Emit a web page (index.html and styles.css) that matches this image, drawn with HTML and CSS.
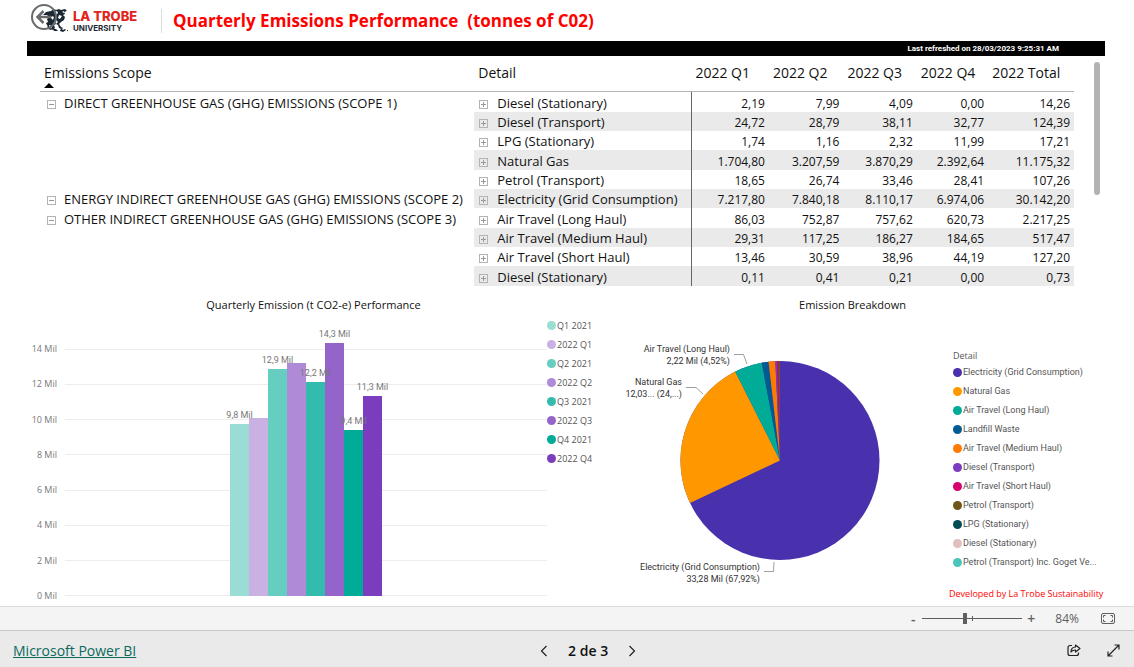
FILE: index.html
```html
<!DOCTYPE html>
<html lang="en">
<head>
<meta charset="utf-8">
<title>Quarterly Emissions Performance</title>
<link rel="stylesheet" href="styles.css">
</head>
<body>
<main class="report">
  <header class="head">
    <button class="back" aria-label="Back">
      <svg width="40" height="32" viewBox="30 1 40 32">
        <g fill="#1b2733">
          <path d="M46 12l5-1 3-2 2 1 3-1 2 1 4-1 2 2-3 1 1 2-2 1 2 2-1 3-3 2-2 2 2 3 2 1-1 1-3-1-1-3-2-1-2 1 1 3-2 2-2-1 1-2-2-2-3 0-1-2 2-1-1-3 2-2-2-2-4 0z"/>
          <path d="M47 24l2 1 1 3 2 1-1 1-3-1zM53 29l3 0 2 2-4 0zM61 28l2 2 2-1 1 1-3 2-3-1zM67 30h1v1h-1z"/>
        </g>
        <g fill="#fff"><path d="M54 12l3-1 1 2-2 2zM52 16l2 1-1 3-2-2zM59 15l3 1-2 3-2-1zM56 20l2 2-2 2-1-2zM62 12l2-1v2z"/></g>
        <circle cx="44" cy="17" r="12" fill="none" stroke="#6b6b6b" stroke-width="2"/>
        <path d="M51 17H38M43.500 11l-6 6 6 6" fill="none" stroke="#6b6b6b" stroke-width="2.500"/>
      </svg>
    </button>
    <div class="brand"><span class="brand-top">LA TROBE</span><span class="brand-sub">UNIVERSITY</span></div>
    <h1 class="title">Quarterly Emissions Performance&nbsp; (tonnes of C02)</h1>
  </header>
  <div class="stamp">Last refreshed on 28/03/2023 9:25:31 AM</div>

  <section class="matrix">
    <table class="grid">
      <colgroup><col class="c-scope"><col class="c-detail"><col class="c-q1"><col class="c-q2"><col class="c-q3"><col class="c-q4"><col class="c-total"></colgroup>
      <thead><tr><th>Emissions Scope<span class="sort"></span></th><th>Detail</th><th>2022 Q1</th><th>2022 Q2</th><th>2022 Q3</th><th>2022 Q4</th><th>2022 Total</th></tr></thead>
      <tbody>
        <tr><td><button class="box" aria-label="Collapse"></button>DIRECT GREENHOUSE GAS (GHG) EMISSIONS (SCOPE 1)</td><td><button class="box plus" aria-label="Expand"></button>Diesel (Stationary)</td><td>2,19</td><td>7,99</td><td>4,09</td><td>0,00</td><td>14,26</td></tr>
        <tr><td></td><td><button class="box plus" aria-label="Expand"></button>Diesel (Transport)</td><td>24,72</td><td>28,79</td><td>38,11</td><td>32,77</td><td>124,39</td></tr>
        <tr><td></td><td><button class="box plus" aria-label="Expand"></button>LPG (Stationary)</td><td>1,74</td><td>1,16</td><td>2,32</td><td>11,99</td><td>17,21</td></tr>
        <tr><td></td><td><button class="box plus" aria-label="Expand"></button>Natural Gas</td><td>1.704,80</td><td>3.207,59</td><td>3.870,29</td><td>2.392,64</td><td>11.175,32</td></tr>
        <tr><td></td><td><button class="box plus" aria-label="Expand"></button>Petrol (Transport)</td><td>18,65</td><td>26,74</td><td>33,46</td><td>28,41</td><td>107,26</td></tr>
        <tr><td><button class="box" aria-label="Collapse"></button>ENERGY INDIRECT GREENHOUSE GAS (GHG) EMISSIONS (SCOPE 2)</td><td><button class="box plus" aria-label="Expand"></button>Electricity (Grid Consumption)</td><td>7.217,80</td><td>7.840,18</td><td>8.110,17</td><td>6.974,06</td><td>30.142,20</td></tr>
        <tr><td><button class="box" aria-label="Collapse"></button>OTHER INDIRECT GREENHOUSE GAS (GHG) EMISSIONS (SCOPE 3)</td><td><button class="box plus" aria-label="Expand"></button>Air Travel (Long Haul)</td><td>86,03</td><td>752,87</td><td>757,62</td><td>620,73</td><td>2.217,25</td></tr>
        <tr><td></td><td><button class="box plus" aria-label="Expand"></button>Air Travel (Medium Haul)</td><td>29,31</td><td>117,25</td><td>186,27</td><td>184,65</td><td>517,47</td></tr>
        <tr><td></td><td><button class="box plus" aria-label="Expand"></button>Air Travel (Short Haul)</td><td>13,46</td><td>30,59</td><td>38,96</td><td>44,19</td><td>127,20</td></tr>
        <tr><td></td><td><button class="box plus" aria-label="Expand"></button>Diesel (Stationary)</td><td>0,11</td><td>0,41</td><td>0,21</td><td>0,00</td><td>0,73</td></tr>
      </tbody>
    </table>
    <div class="scroll"></div>
  </section>

  <div class="charts">
    <section class="bar-card">
      <h2 class="chart-title">Quarterly Emission (t CO2-e) Performance</h2>
      <div class="plot">
        <div class="ticks">
          <div class="tick"><span>14 Mil</span></div>
          <div class="tick"><span>12 Mil</span></div>
          <div class="tick"><span>10 Mil</span></div>
          <div class="tick"><span>8 Mil</span></div>
          <div class="tick"><span>6 Mil</span></div>
          <div class="tick"><span>4 Mil</span></div>
          <div class="tick"><span>2 Mil</span></div>
          <div class="tick"><span>0 Mil</span></div>
        </div>
        <div class="bars">
          <div class="bar q1-21" style="height:69.8%"><span>9,8 Mil</span></div>
          <div class="bar q1-22" style="height:72.2%"></div>
          <div class="bar q2-21" style="height:92.1%"><span>12,9 Mil</span></div>
          <div class="bar q2-22" style="height:94.5%"></div>
          <div class="bar q3-21" style="height:86.8%"><span>12,2 Mil</span></div>
          <div class="bar q3-22" style="height:102.6%"><span>14,3 Mil</span></div>
          <div class="bar q4-21" style="height:67.3%"><span>9,4 Mil</span></div>
          <div class="bar q4-22" style="height:81.1%"><span>11,3 Mil</span></div>
        </div>
      </div>
      <ul class="legend">
        <li><i class="dot q1-21"></i>Q1 2021</li>
        <li><i class="dot q1-22"></i>2022 Q1</li>
        <li><i class="dot q2-21"></i>Q2 2021</li>
        <li><i class="dot q2-22"></i>2022 Q2</li>
        <li><i class="dot q3-21"></i>Q3 2021</li>
        <li><i class="dot q3-22"></i>2022 Q3</li>
        <li><i class="dot q4-21"></i>Q4 2021</li>
        <li><i class="dot q4-22"></i>2022 Q4</li>
      </ul>
    </section>

    <section class="pie-card">
      <h2 class="chart-title">Emission Breakdown</h2>
      <svg class="pie" width="310" height="250" viewBox="620 340 310 250">
        <circle cx="780" cy="460.5" r="99.5" fill="#4930ad"/>
        <path fill="#ff9800" d="M780 460.5L690 503A99.5 99.5 0 0 1 735.2 371.6Z"/>
        <path fill="#00ab98" d="M780 460.5L735.2 371.6A99.5 99.5 0 0 1 761.8 362.7Z"/>
        <path fill="#005b94" d="M780 460.5L761.8 362.7A99.5 99.5 0 0 1 768.5 361.7Z"/>
        <path fill="#ff7a00" d="M780 460.5L768.5 361.7A99.5 99.5 0 0 1 775.3 361.1Z"/>
        <path fill="#7b3dbd" d="M780 460.5L775.3 361.1A99.5 99.5 0 0 1 777 361Z"/>
        <path fill="#d6006e" d="M780 460.5L777 361A99.5 99.5 0 0 1 778.5 361Z"/>
        <path fill="#6e561b" d="M780 460.5L778.5 361A99.5 99.5 0 0 1 780 361Z"/>
        <g fill="none" stroke="#a0a0a0"><path d="M734 354.500H743.500L747 364M686 387.500H696L703 394M764 571.500H773.500L774 562"/></g>
        <g class="callout" text-anchor="end">
          <text x="730" y="352">Air Travel (Long Haul)</text><text x="730" y="364">2,22 Mil (4,52%)</text>
          <text x="682" y="385">Natural Gas</text><text x="682" y="397">12,03... (24,...)</text>
          <text x="760" y="570">Electricity (Grid Consumption)</text><text x="760" y="582">33,28 Mil (67,92%)</text>
        </g>
      </svg>
      <div class="pie-side">
        <h3 class="legend-title">Detail</h3>
        <ul class="legend">
          <li><i class="dot d1"></i>Electricity (Grid Consumption)</li>
          <li><i class="dot d2"></i>Natural Gas</li>
          <li><i class="dot d3"></i>Air Travel (Long Haul)</li>
          <li><i class="dot d4"></i>Landfill Waste</li>
          <li><i class="dot d5"></i>Air Travel (Medium Haul)</li>
          <li><i class="dot d6"></i>Diesel (Transport)</li>
          <li><i class="dot d7"></i>Air Travel (Short Haul)</li>
          <li><i class="dot d8"></i>Petrol (Transport)</li>
          <li><i class="dot d9"></i>LPG (Stationary)</li>
          <li><i class="dot d10"></i>Diesel (Stationary)</li>
          <li><i class="dot d11"></i>Petrol (Transport) Inc. Goget Ve...</li>
        </ul>
        <p class="credit">Developed by La Trobe Sustainability</p>
      </div>
    </section>
  </div>
</main>

<div class="zoombar">
  <button class="step" aria-label="Zoom out">-</button>
  <input class="slider" type="range" min="0" max="100" value="42" aria-label="Zoom">
  <button class="step" aria-label="Zoom in">+</button>
  <span class="percent">84%</span>
  <button class="fit" aria-label="Fit to page">
    <svg width="14" height="11" viewBox="0 0 14 11" fill="none" stroke="#605e5c"><rect x=".5" y=".5" width="13" height="10" rx="1.500"/><path d="M2.500 4.500v-2h2M9.500 2.500h2v2M11.500 6.500v2h-2M4.500 8.500h-2v-2"/></svg>
  </button>
</div>

<footer class="foot">
  <a class="home" href="#">Microsoft Power BI</a>
  <nav class="pager">
    <button aria-label="Previous page"><svg width="8" height="12" viewBox="0 0 8 12"><path d="M6.500 1L1.500 6l5 5" fill="none" stroke="#222" stroke-width="1.200"/></svg></button>
    <span>2 de 3</span>
    <button aria-label="Next page"><svg width="8" height="12" viewBox="0 0 8 12"><path d="M1.500 1l5 5-5 5" fill="none" stroke="#222" stroke-width="1.200"/></svg></button>
  </nav>
  <div class="tools">
    <button aria-label="Share"><svg width="14" height="13" viewBox="0 0 14 13" fill="none" stroke="#222" stroke-width="1.200"><path d="M5 1.500H3a2 2 0 0 0-2 2v6a2 2 0 0 0 2 2h6.500a2 2 0 0 0 2-2V8.500"/><path d="M8.500 1l4.500 3.500-4.500 3.500V6C6 6 4.800 6.800 4 8c0-3 1.500-4.800 4.500-5z" stroke-linejoin="round"/></svg></button>
    <button aria-label="Full screen"><svg width="13" height="13" viewBox="0 0 13 13" fill="none" stroke="#222" stroke-width="1.200"><path d="M1 12L12 1M7.500 1H12v4.500M1 7.500V12h4.500"/></svg></button>
  </div>
</footer>
</body>
</html>
```
FILE: styles.css
```css
* { box-sizing: border-box; }
body {
  margin: 0;
  min-height: 100vh;
  display: flex;
  flex-direction: column;
  font-family: "Open Sans", "Noto Sans", sans-serif;
  color: #111;
  background: #fff;
}
button { border: 0; padding: 0; background: none; font: inherit; color: inherit; display: inline-flex; align-items: center; justify-content: center; }
h1, h2, h3, p, ul { margin: 0; padding: 0; font-weight: 400; }
ul { list-style: none; }

.report { flex: 1; display: flex; flex-direction: column; padding: 0 29px 0 27px; }

.head { display: flex; align-items: center; height: 41px; padding-left: 3px; }
.back { width: 43px; height: 40px; align-items: flex-start; justify-content: flex-start; }
.brand { display: flex; flex-direction: column; width: 88px; font-family: Inter, sans-serif; font-weight: 800; }
.brand-top { font-size: 13px; line-height: 14px; color: #e1251b; }
.brand-sub { font-size: 8px; line-height: 10px; font-weight: 700; color: #1b2733; }
.title { padding-left: 11px; border-left: 1px solid #ddd; font-size: 17px; line-height: 24px; font-weight: 700; color: #f00; white-space: nowrap; }

.stamp {
  height: 15px;
  padding-right: 46px;
  background: #000;
  color: #fff;
  font: 700 8px/15px Roboto, sans-serif;
  text-align: right;
}

.matrix { display: flex; justify-content: space-between; align-items: flex-start; padding: 0 5px 0 13px; }
.scroll { width: 6px; height: 133px; margin-top: 6px; border-radius: 3px; background: #b3b3b3; }
.grid { flex: 1; margin-right: 20px; border-collapse: separate; border-spacing: 0; table-layout: fixed; }
.c-scope { width: 42%; }
.c-detail { width: 21%; }
.c-q1 { width: 7.500%; }
.c-q2 { width: 7.200%; }
.c-q3 { width: 7.100%; }
.c-q4 { width: 6.900%; }
.c-total { width: 8.300%; }
.grid th {
  height: 36px;
  padding: 7px 4px 0;
  border-bottom: 1px solid #b3b3b3;
  font-size: 14px;
  line-height: 20px;
  font-weight: 400;
  text-align: left;
  vertical-align: top;
  white-space: nowrap;
}
.sort { display: block; width: 0; border: 5px solid transparent; border-top-width: 0; border-bottom-color: #000; }
.grid td { height: 19px; padding: 2px 4px 0; font-size: 12px; line-height: 17px; text-align: right; white-space: nowrap; }
.grid tr:nth-child(3n+1) td { height: 20px; }
.grid td:nth-child(-n+2) { font-size: 13px; text-align: left; }
.grid td:first-child { padding-left: 7px; }
.grid td:nth-child(2) { padding-left: 5px; }
.grid td:nth-child(3) { border-left: 1px solid #666; }
.grid tbody tr:nth-child(even) td:not(:first-child) { background: #eaeaea; }
.box {
  width: 9px;
  height: 9px;
  margin-right: 8px;
  border: 1px solid #b3b3b3;
  background: linear-gradient(#999, #999) center / 5px 1px no-repeat;
}
.plus { margin-right: 9px; background: linear-gradient(#999, #999) center / 5px 1px no-repeat, linear-gradient(#999, #999) center / 1px 5px no-repeat; }

.charts { flex: 1; display: grid; grid-template-columns: 573fr 505fr; margin-top: 2px; }
.chart-title { grid-column: 1 / -1; font-size: 11px; line-height: 34px; height: 28px; text-align: center; }
.bar-card { display: grid; grid-template-columns: 1fr 53px; grid-template-rows: 28px 1fr; }
.plot { display: grid; margin-top: 27px; padding-bottom: 4px; min-height: 262px; }
.ticks { grid-area: 1 / 1; display: flex; flex-direction: column; justify-content: space-between; }
.tick { display: flex; align-items: center; font-size: 9px; line-height: 12px; color: #777; }
.tick span { width: 30px; text-align: right; }
.tick::after { content: ""; flex: 1; height: 1px; margin-left: 8px; background: #ededed; }
.bars { grid-area: 1 / 1; display: flex; justify-content: center; align-items: flex-end; margin: 6px 0 6px 38px; }
.bar { position: relative; width: 19px; }
.bar span { position: absolute; z-index: 1; bottom: 100%; left: 50%; transform: translateX(-50%); padding-bottom: 3px; font: 9px/12px Roboto, sans-serif; color: #777; white-space: nowrap; }
.q1-21 { background: #99ddd5; }
.q1-22 { background: #c9b1e4; }
.q2-21 { background: #66cdc1; }
.q2-22 { background: #af8bd7; }
.q3-21 { background: #33bcad; }
.q3-22 { background: #9564ca; }
.q4-21 { background: #00ab98; }
.q4-22 { background: #7b3dbd; }

.legend { font-size: 9px; line-height: 19px; color: #555; white-space: nowrap; }
.legend li { display: flex; align-items: center; gap: 1px; }
.dot { width: 9px; height: 9px; border-radius: 50%; }

.pie-card { display: grid; grid-template-columns: 1fr 156px; grid-template-rows: 28px 1fr; }
.pie { margin-top: 24px; justify-self: center; }
.callout { font: 9px Roboto, sans-serif; fill: #333; }
.pie-side { display: flex; flex-direction: column; padding-top: 33px; }
.pie-side .legend { padding-left: 4px; font-family: Roboto, sans-serif; }
.legend-title { padding-left: 4px; font-size: 9px; line-height: 14px; color: #555; }
.credit { margin-top: 15px; font-size: 9px; line-height: 14px; color: #f00; white-space: nowrap; }
.d1 { background: #4930ad; }
.d2 { background: #ff9800; }
.d3 { background: #00ab98; }
.d4 { background: #005b94; }
.d5 { background: #ff7a00; }
.d6 { background: #7b3dbd; }
.d7 { background: #d6006e; }
.d8 { background: #6e561b; }
.d9 { background: #004d56; }
.d10 { background: #dfbfbf; }
.d11 { background: #4ac5bb; }

.zoombar { display: flex; align-items: center; justify-content: flex-end; height: 24px; padding-right: 19px; border-top: 1px solid #dcdcdc; background: #f4f4f4; color: #605e5c; }
.step { width: 18px; font-size: 14px; line-height: 20px; font-weight: 600; }
.slider { appearance: none; width: 100px; height: 12px; margin: 0; background: linear-gradient(#605e5c, #605e5c) 50% 50% / 1px 5px no-repeat, linear-gradient(#605e5c, #605e5c) center / 100% 1px no-repeat; }
.slider::-webkit-slider-thumb { appearance: none; width: 4px; height: 11px; background: #605e5c; }
.percent { margin-left: 15px; margin-right: 22px; font-size: 12px; line-height: 20px; }

.foot { display: flex; align-items: center; justify-content: space-between; height: 37px; padding: 3px 14px 0 13px; border-top: 1px solid #c8c8c8; background: #eaeaea; }
.home { font-size: 14px; line-height: 20px; color: #0b6a5d; }
.pager { display: flex; align-items: center; gap: 20px; font-size: 14px; line-height: 20px; font-weight: 600; }
.tools { display: flex; justify-content: flex-end; gap: 26px; width: 80px; }
```
